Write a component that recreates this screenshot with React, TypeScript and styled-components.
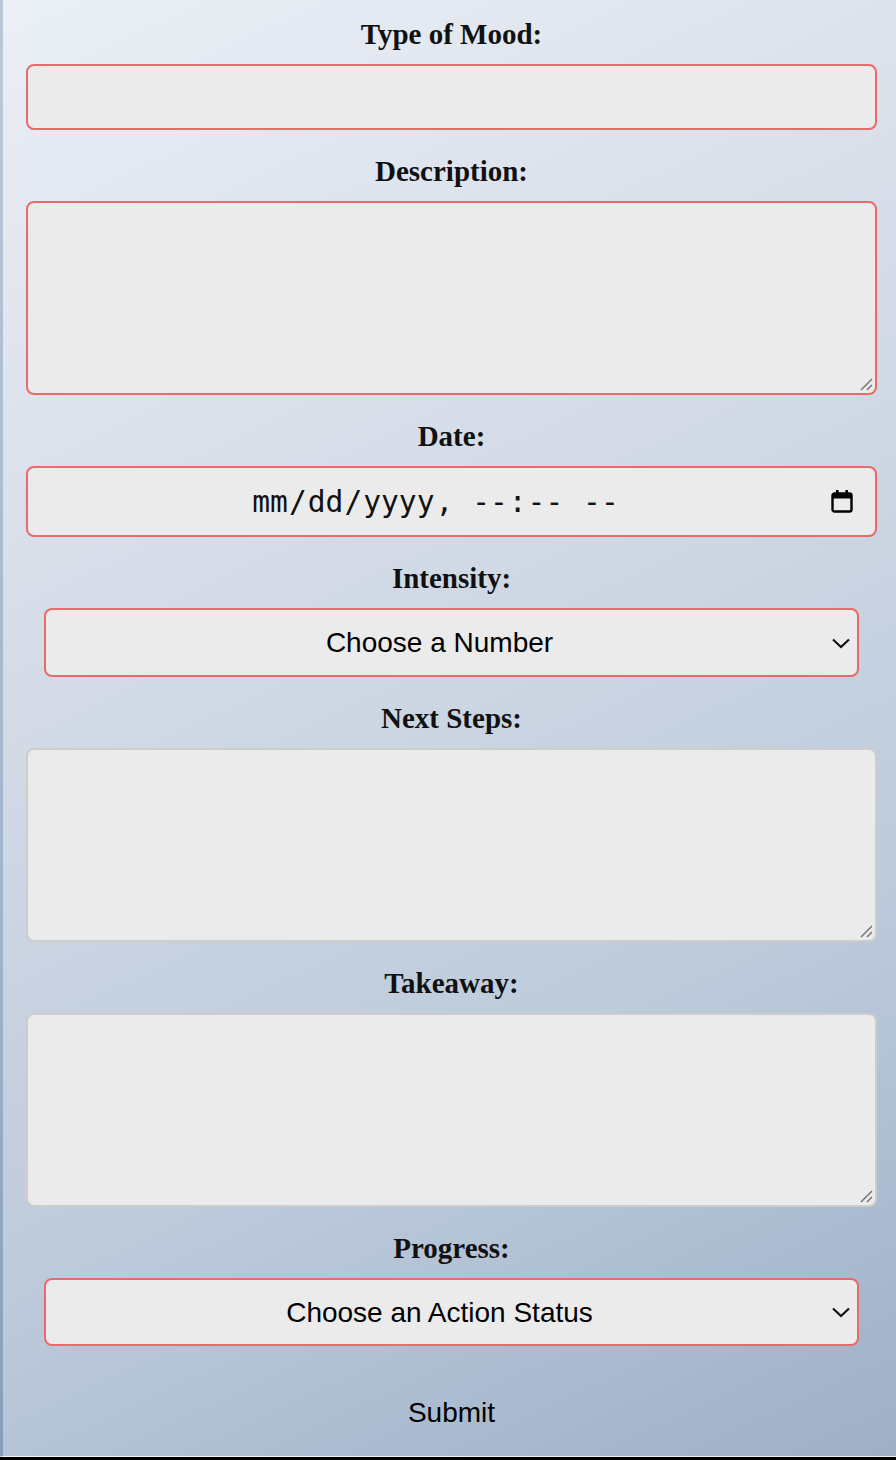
import React, { useState } from "react";
import styled, { createGlobalStyle } from "styled-components";

const GlobalStyle = createGlobalStyle`
  * {
    box-sizing: border-box;
  }

  body {
    margin: 0;
    font-family: "Liberation Sans", Arial, sans-serif;
  }
`;

const Page = styled.div`
  min-height: 1457px;
  background: linear-gradient(155deg, #ebeff6 0%, #d2dae6 40%, #bccadb 70%, #9eb0c7 100%);
  border-left: 3px solid rgba(40, 80, 120, 0.18);
  border-bottom: 1px solid rgba(255, 255, 255, 0.45);
`;

const FooterEdge = styled.div`
  height: 3px;
  background: #000;
`;

const Form = styled.form`
  display: flex;
  flex-direction: column;
  gap: 23px;
  padding: 16px 19px 0 23px;
`;

const Group = styled.div`
  display: flex;
  flex-direction: column;
  align-items: stretch;
`;

const Label = styled.label`
  display: block;
  text-align: center;
  font-family: "Liberation Serif", "Times New Roman", serif;
  font-weight: 700;
  font-size: 29px;
  line-height: 36px;
  color: #111;
  margin-bottom: 12px;
`;

const fieldBase = `
  width: 100%;
  background: #ebebeb;
  border-radius: 8px;
  color: #000;
  outline: none;
`;

const TextInput = styled.input`
  ${fieldBase}
  height: 66px;
  border: 2px solid #e66b69;
  padding: 0 16px;
  font-size: 28px;
  font-family: "Liberation Sans", Arial, sans-serif;
`;

const TextArea = styled.textarea<{ $accent?: boolean }>`
  ${fieldBase}
  display: block;
  height: 194px;
  border: 2px solid ${(p) => (p.$accent ? "#e66b69" : "#cdcdcd")};
  padding: 12px 16px;
  font-size: 28px;
  font-family: "Liberation Sans", Arial, sans-serif;
  resize: none;
`;

const FieldWrap = styled.div`
  position: relative;
`;

// textarea grip drawn larger, as in the reference
const Grip = styled.svg`
  position: absolute;
  right: 4px;
  bottom: 4px;
  pointer-events: none;
`;

const DateInput = styled.input`
  ${fieldBase}
  height: 71px;
  border: 2px solid #e66b69;
  padding: 0 22px 0 16px;
  font-size: 29.6px;
  font-family: "DejaVu Sans Mono", "Liberation Mono", monospace;
  text-align: center;
  color: #111;

  &::-webkit-datetime-edit {
    text-align: center;
  }

  &::-webkit-calendar-picker-indicator {
    width: 22px;
    height: 26px;
    opacity: 0;
  }
`;

const CalendarIcon = styled.svg`
  position: absolute;
  right: 24px;
  top: 23px;
  pointer-events: none;
`;

const SelectWrap = styled.div`
  position: relative;
  margin: 0 18px;
`;

const Select = styled.select<{ $h: number }>`
  ${fieldBase}
  appearance: none;
  -webkit-appearance: none;
  height: ${(p) => p.$h}px;
  border: 2px solid #e66b69;
  padding: 0 40px 0 16px;
  font-size: 28px;
  font-family: "Liberation Sans", Arial, sans-serif;
  text-align: center;
  text-align-last: center;
`;

const Chevron = styled.svg`
  position: absolute;
  right: 8px;
  top: 50%;
  transform: translateY(-50%);
  pointer-events: none;
`;

const SubmitButton = styled.button`
  align-self: center;
  background: transparent;
  border: none;
  padding: 28px 20px 24px;
  font-family: "Liberation Sans", Arial, sans-serif;
  font-size: 28px;
  line-height: 32px;
  color: #000;
  cursor: pointer;
`;

const ChevronDown = () => (
  <Chevron width="20" height="12" viewBox="0 0 20 12">
    <path d="M2 2.5 L10 10 L18 2.5" fill="none" stroke="#111" strokeWidth="2.2" />
  </Chevron>
);

const Area = ({ id, accent }: { id: string; accent?: boolean }) => (
  <FieldWrap>
    <TextArea id={id} $accent={accent} />
    <Grip width="14" height="14" viewBox="0 0 14 14">
      <path d="M2 13 L13 2 M8 13 L13 8" stroke="#6f6f6f" strokeWidth="1.4" />
    </Grip>
  </FieldWrap>
);

const App = () => {
  const [mood, setMood] = useState("");
  const [intensity, setIntensity] = useState("");
  const [progress, setProgress] = useState("");

  return (
    <>
      <GlobalStyle />
      <Page>
        <Form onSubmit={(e) => e.preventDefault()}>
          <Group>
            <Label htmlFor="mood">Type of Mood:</Label>
            <TextInput id="mood" type="text" value={mood} onChange={(e) => setMood(e.target.value)} />
          </Group>
          <Group>
            <Label htmlFor="description">Description:</Label>
            <Area id="description" accent />
          </Group>
          <Group>
            <Label htmlFor="date">Date:</Label>
            <FieldWrap>
              <DateInput id="date" type="datetime-local" />
              <CalendarIcon width="22" height="24" viewBox="0 0 22 24">
                <rect x="1.5" y="4.5" width="19" height="18" rx="2" fill="none" stroke="#000" strokeWidth="2.4" />
                <rect x="1.5" y="4.5" width="19" height="5" fill="#000" />
                <rect x="5" y="1" width="2.6" height="5" fill="#000" />
                <rect x="14.4" y="1" width="2.6" height="5" fill="#000" />
              </CalendarIcon>
            </FieldWrap>
          </Group>
          <Group>
            <Label htmlFor="intensity">Intensity:</Label>
            <SelectWrap>
              <Select id="intensity" $h={69} value={intensity} onChange={(e) => setIntensity(e.target.value)}>
                <option value="">Choose a Number</option>
                {[1, 2, 3, 4, 5, 6, 7, 8, 9, 10].map((n) => (
                  <option key={n} value={n}>
                    {n}
                  </option>
                ))}
              </Select>
              <ChevronDown />
            </SelectWrap>
          </Group>
          <Group>
            <Label htmlFor="next">Next Steps:</Label>
            <Area id="next" />
          </Group>
          <Group>
            <Label htmlFor="takeaway">Takeaway:</Label>
            <Area id="takeaway" />
          </Group>
          <Group>
            <Label htmlFor="progress">Progress:</Label>
            <SelectWrap>
              <Select id="progress" $h={68} value={progress} onChange={(e) => setProgress(e.target.value)}>
                <option value="">Choose an Action Status</option>
                <option value="not-started">Not Started</option>
                <option value="in-progress">In Progress</option>
                <option value="done">Done</option>
              </Select>
              <ChevronDown />
            </SelectWrap>
          </Group>
          <SubmitButton type="submit">Submit</SubmitButton>
        </Form>
      </Page>
      <FooterEdge />
    </>
  );
};

export default App;
